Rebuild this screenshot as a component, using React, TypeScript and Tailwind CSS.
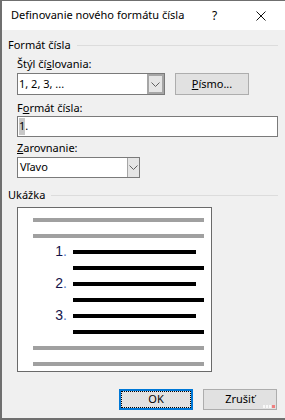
import type { ReactNode } from "react";

const FONT = { fontFamily: '"Noto Sans", "Segoe UI", sans-serif' };

function Chevron() {
  return (
    <svg width="9" height="5" viewBox="0 0 9 5" fill="none">
      <path d="M0.5 0.5 L4.5 4.5 L8.5 0.5" stroke="#606060" strokeWidth="1" />
    </svg>
  );
}

function GroupHeader({ children }: { children: ReactNode }) {
  return (
    <div className="flex h-4 items-center gap-[6px] pl-[8px] pr-[7px] text-[11px] leading-4 text-black">
      <span>{children}</span>
      <div className="h-px flex-1 bg-[#dcdcdc]" />
    </div>
  );
}

function Label({ children }: { children: ReactNode }) {
  return <div className="h-4 pl-[17px] text-[11px] leading-4 text-black">{children}</div>;
}

function Bar({ color, left, right }: { color: string; left: number; right: number }) {
  return (
    <div
      className={`h-[4px] ${color}`}
      style={{ marginLeft: left, marginRight: right }}
    />
  );
}

// one numbered item in the preview: the number, a short line, then a full line
function PreviewItem({ n }: { n: number }) {
  return (
    <>
      <div className="relative">
        <span
          style={{ fontFamily: '"Liberation Sans", Arial, sans-serif' }}
          className="absolute right-[144px] top-[-7px] text-[14px] leading-4 text-[#14144a]"
        >
          {n}
          <span className="text-[#5a7ac8]">.</span>
        </span>
        <Bar color="bg-black" left={55} right={15} />
      </div>
      <Bar color="bg-black" left={55} right={7} />
    </>
  );
}

export default function App() {
  return (
    <div
      style={FONT}
      className="flex h-[420px] w-[285px] flex-col overflow-hidden border-t border-l-2 border-b-2 border-[#6f6f6f] bg-[#f0f0f0]"
    >
      {/* title bar */}
      <div className="flex h-[29px] shrink-0 items-center bg-white pl-[9px] text-[11px] text-black">
        <span className="flex-1">Definovanie nového formátu čísla</span>
        <span className="w-[6px] text-[12px]">?</span>
        <svg className="mr-[19px] ml-[38px]" width="10" height="10" viewBox="0 0 10 10">
          <path d="M0.5 0.5 L9.5 9.5 M9.5 0.5 L0.5 9.5" stroke="#111" strokeWidth="1" />
        </svg>
      </div>

      <div className="mt-[7px] -ml-[2px] flex flex-col">
        <GroupHeader>Formát čísla</GroupHeader>

        <div className="mt-[3px]">
          <Label>
            Štýl čí<u>s</u>lovania:
          </Label>
        </div>
        <div className="mt-[1px] flex pl-[17px]">
          <div className="flex h-[22px] w-[148px] border border-[#7a7a7a] bg-white">
            <div className="flex flex-1 items-center pl-[1px] text-[11px] text-black">1, 2, 3, ...</div>
            <div className="flex w-[17px] items-center justify-center border-2 border-[#a6a6a6] bg-[#e5e5e5]">
              <Chevron />
            </div>
          </div>
          <div className="ml-[10px] flex h-[22px] w-[74px] items-center justify-center border border-[#adadad] bg-[#e1e1e1] text-[11px] text-black">
            <span>
              <u>P</u>ísmo...
            </span>
          </div>
        </div>

        <div className="mt-[5px]">
          <Label>
            F<u>o</u>rmát čísla:
          </Label>
        </div>
        <div className="pl-[17px] pr-[7px]">
          <div className="flex h-[21px] items-center border border-[#7a7a7a] bg-white pl-[1px] text-[11px] text-black">
            <span className="bg-[#c8c8c8]">1</span>.
          </div>
        </div>

        <div className="mt-[3px]">
          <Label>
            <u>Z</u>arovnanie:
          </Label>
        </div>
        <div className="mt-[1px] flex pl-[17px]">
          <div className="flex h-[21px] w-[123px] border border-[#7a7a7a] bg-white">
            <div className="flex flex-1 items-center pl-[2px] text-[11px] text-black">Vľavo</div>
            <div className="flex w-[12px] items-center justify-center border-l border-[#a6a6a6] bg-[#e5e5e5]">
              <Chevron />
            </div>
          </div>
        </div>

        <div className="mt-[9px]">
          <GroupHeader>Ukážka</GroupHeader>
        </div>

        {/* preview of the list format */}
        <div className="mt-[4px] pl-[17px]">
          <div className="flex h-[165px] w-[195px] flex-col gap-[12px] border border-[#6a6a6a] bg-white pt-[10px]">
            <Bar color="bg-[#a0a0a0]" left={15} right={7} />
            <Bar color="bg-[#a0a0a0]" left={15} right={7} />
            <PreviewItem n={1} />
            <PreviewItem n={2} />
            <PreviewItem n={3} />
            <Bar color="bg-[#a0a0a0]" left={15} right={7} />
            <Bar color="bg-[#a0a0a0]" left={15} right={7} />
          </div>
        </div>

        <div className="mt-[17px] flex pl-[119px]">
          <div className="flex h-[21px] w-[74px] items-center justify-center border-2 border-[#0078d7] bg-[#e1e1e1] text-[11px] text-black">
            <div className="flex h-full w-full items-center justify-center border border-dotted border-black">
              OK
            </div>
          </div>
          <div className="relative ml-[10px] flex h-[21px] w-[74px] items-center justify-center border border-[#adadad] bg-[#e1e1e1] text-[11px] text-black">
            Zrušiť
            <div className="absolute right-[1px] bottom-[1px] flex gap-[1px]">
              <div className="h-[3px] w-[2px] bg-[#f8f8f8]" />
              <div className="h-[3px] w-[2px] bg-[#f8f8f8]" />
              <div className="h-[3px] w-[2px] bg-[#f8f8f8]" />
              <div className="h-[3px] w-[3px] bg-[#f08080]" />
            </div>
          </div>
        </div>
      </div>
    </div>
  );
}
